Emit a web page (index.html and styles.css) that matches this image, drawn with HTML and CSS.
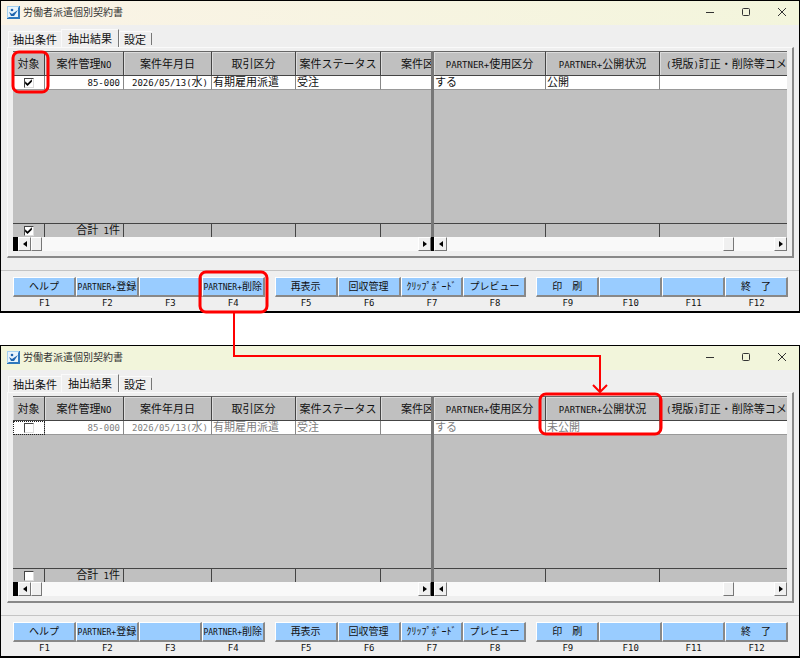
FILE: index.html
```html
<!DOCTYPE html>
<html lang="ja">
<head>
  <meta charset="UTF-8">
  <meta name="viewport" content="width=device-width, initial-scale=1.0">
  <title>労働者派遣個別契約書</title>
  <link rel="stylesheet" href="styles.css">
</head>
<body>
  <!-- Before: published -->
  <section class="window">
    <header class="titlebar">
      <svg class="app-icon" viewBox="0 0 13 13"><rect width="13" height="13" fill="#2f78bd"/><path d="M0 0h12v1L1 12H0z" fill="#a5d0ef"/><path d="M1 1h10v10H1z" fill="#e8f4fc"/><circle cx="5" cy="4" r="1.3" fill="#1d63ae"/><path d="M2 6l3 2 6-4-4 6H4z" fill="#1d63ae"/></svg>
      <h1>労働者派遣個別契約書</h1>
      <div class="window-controls">
        <button aria-label="最小化"><svg viewBox="0 0 10 10"><path d="M1 5.5h8"/></svg></button>
        <button aria-label="最大化"><svg viewBox="0 0 10 10"><rect x="1.5" y="1.5" width="7" height="7" rx="1"/></svg></button>
        <button aria-label="閉じる"><svg viewBox="0 0 10 10"><path d="M1 1l8 8M9 1L1 9"/></svg></button>
      </div>
    </header>
    <nav class="tabs">
      <button class="tab">抽出条件</button>
      <button class="tab active">抽出結果</button>
      <button class="tab">設定</button>
    </nav>
    <main class="panel">
      <div class="grid">
        <div class="pane pane-left">
          <div class="table-clip">
            <table class="table-left">
              <colgroup><col class="c-check"><col class="c-no"><col class="c-date"><col class="c-type"><col class="c-status"><col class="c-kind"></colgroup>
              <thead>
                <tr><th>対象</th><th>案件管理<span class="en">NO</span></th><th>案件年月日</th><th>取引区分</th><th>案件ステータス</th><th>案件区分</th></tr>
              </thead>
              <tbody>
                <tr class="row">
                  <td class="check"><input type="checkbox" aria-label="対象" checked></td>
                  <td class="num"><span class="en">85-000</span></td>
                  <td class="num"><span class="en">2026/05/13(</span>水<span class="en">)</span></td>
                  <td>有期雇用派遣</td><td>受注</td><td></td>
                </tr>
                <tr class="filler"><td colspan="6"></td></tr>
              </tbody>
              <tfoot>
                <tr><td class="check"><input type="checkbox" aria-label="すべて対象" checked></td><td class="num">合計<span class="en"> 1</span>件</td><td></td><td></td><td></td><td></td></tr>
              </tfoot>
            </table>
          </div>
          <div class="scrollbar">
            <span class="split-handle"></span>
            <button class="arrow left" aria-label="左へ"></button>
            <span class="thumb"></span>
            <span class="track"></span>
            <button class="arrow right" aria-label="右へ"></button>
          </div>
        </div>
        <div class="splitter"></div>
        <div class="pane pane-right">
          <div class="table-clip">
            <table class="table-right">
              <colgroup><col class="c-use"><col class="c-public"><col></colgroup>
              <thead>
                <tr><th><span class="en">PARTNER+</span>使用区分</th><th><span class="en">PARTNER+</span>公開状況</th><th class="long"><span class="en">(</span>現版<span class="en">)</span>訂正・削除等コメント</th></tr>
              </thead>
              <tbody>
                <tr class="row"><td>する</td><td>公開</td><td></td></tr>
                <tr class="filler"><td colspan="3"></td></tr>
              </tbody>
              <tfoot>
                <tr><td></td><td></td><td></td></tr>
              </tfoot>
            </table>
          </div>
          <div class="scrollbar">
            <button class="arrow left" aria-label="左へ"></button>
            <span class="track"></span>
            <span class="thumb"></span>
            <span class="track track-end"></span>
            <button class="arrow right" aria-label="右へ"></button>
          </div>
        </div>
      </div>
    </main>
    <footer class="function-keys">
      <div class="key-group">
        <div class="key"><button id="a1">ヘルプ</button><label for="a1">F1</label></div>
        <div class="key"><button id="a2"><span class="en">PARTNER+</span>登録</button><label for="a2">F2</label></div>
        <div class="key"><button id="a3"></button><label for="a3">F3</label></div>
        <div class="key"><button id="a4"><span class="en">PARTNER+</span>削除</button><label for="a4">F4</label></div>
      </div>
      <div class="key-group">
        <div class="key"><button id="a5">再表示</button><label for="a5">F5</label></div>
        <div class="key"><button id="a6">回収管理</button><label for="a6">F6</label></div>
        <div class="key"><button id="a7">ｸﾘｯﾌﾟﾎﾞｰﾄﾞ</button><label for="a7">F7</label></div>
        <div class="key"><button id="a8">プレビュー</button><label for="a8">F8</label></div>
      </div>
      <div class="key-group">
        <div class="key"><button id="a9">印　刷</button><label for="a9">F9</label></div>
        <div class="key"><button id="a10"></button><label for="a10">F10</label></div>
        <div class="key"><button id="a11"></button><label for="a11">F11</label></div>
        <div class="key"><button id="a12">終　了</button><label for="a12">F12</label></div>
      </div>
    </footer>
  </section>

  <!-- After: unpublished -->
  <section class="window">
    <header class="titlebar plain">
      <svg class="app-icon" viewBox="0 0 13 13"><rect width="13" height="13" fill="#2f78bd"/><path d="M0 0h12v1L1 12H0z" fill="#a5d0ef"/><path d="M1 1h10v10H1z" fill="#e8f4fc"/><circle cx="5" cy="4" r="1.3" fill="#1d63ae"/><path d="M2 6l3 2 6-4-4 6H4z" fill="#1d63ae"/></svg>
      <h1>労働者派遣個別契約書</h1>
      <div class="window-controls">
        <button aria-label="最小化"><svg viewBox="0 0 10 10"><path d="M1 5.5h8"/></svg></button>
        <button aria-label="最大化"><svg viewBox="0 0 10 10"><rect x="1.5" y="1.5" width="7" height="7" rx="1"/></svg></button>
        <button aria-label="閉じる"><svg viewBox="0 0 10 10"><path d="M1 1l8 8M9 1L1 9"/></svg></button>
      </div>
    </header>
    <nav class="tabs">
      <button class="tab">抽出条件</button>
      <button class="tab active">抽出結果</button>
      <button class="tab">設定</button>
    </nav>
    <main class="panel">
      <div class="grid">
        <div class="pane pane-left">
          <div class="table-clip">
            <table class="table-left">
              <colgroup><col class="c-check"><col class="c-no"><col class="c-date"><col class="c-type"><col class="c-status"><col class="c-kind"></colgroup>
              <thead>
                <tr><th>対象</th><th>案件管理<span class="en">NO</span></th><th>案件年月日</th><th>取引区分</th><th>案件ステータス</th><th>案件区分</th></tr>
              </thead>
              <tbody>
                <tr class="row muted">
                  <td class="check focus"><input type="checkbox" aria-label="対象"></td>
                  <td class="num"><span class="en">85-000</span></td>
                  <td class="num"><span class="en">2026/05/13(</span>水<span class="en">)</span></td>
                  <td>有期雇用派遣</td><td>受注</td><td></td>
                </tr>
                <tr class="filler"><td colspan="6"></td></tr>
              </tbody>
              <tfoot>
                <tr><td class="check"><input type="checkbox" aria-label="すべて対象"></td><td class="num">合計<span class="en"> 1</span>件</td><td></td><td></td><td></td><td></td></tr>
              </tfoot>
            </table>
          </div>
          <div class="scrollbar">
            <span class="split-handle"></span>
            <button class="arrow left" aria-label="左へ"></button>
            <span class="thumb"></span>
            <span class="track"></span>
            <button class="arrow right" aria-label="右へ"></button>
          </div>
        </div>
        <div class="splitter"></div>
        <div class="pane pane-right">
          <div class="table-clip">
            <table class="table-right">
              <colgroup><col class="c-use"><col class="c-public"><col></colgroup>
              <thead>
                <tr><th><span class="en">PARTNER+</span>使用区分</th><th><span class="en">PARTNER+</span>公開状況</th><th class="long"><span class="en">(</span>現版<span class="en">)</span>訂正・削除等コメント</th></tr>
              </thead>
              <tbody>
                <tr class="row muted"><td>する</td><td>未公開</td><td></td></tr>
                <tr class="filler"><td colspan="3"></td></tr>
              </tbody>
              <tfoot>
                <tr><td></td><td></td><td></td></tr>
              </tfoot>
            </table>
          </div>
          <div class="scrollbar">
            <button class="arrow left" aria-label="左へ"></button>
            <span class="track"></span>
            <span class="thumb"></span>
            <span class="track track-end"></span>
            <button class="arrow right" aria-label="右へ"></button>
          </div>
        </div>
      </div>
    </main>
    <footer class="function-keys">
      <div class="key-group">
        <div class="key"><button id="b1">ヘルプ</button><label for="b1">F1</label></div>
        <div class="key"><button id="b2"><span class="en">PARTNER+</span>登録</button><label for="b2">F2</label></div>
        <div class="key"><button id="b3"></button><label for="b3">F3</label></div>
        <div class="key"><button id="b4"><span class="en">PARTNER+</span>削除</button><label for="b4">F4</label></div>
      </div>
      <div class="key-group">
        <div class="key"><button id="b5">再表示</button><label for="b5">F5</label></div>
        <div class="key"><button id="b6">回収管理</button><label for="b6">F6</label></div>
        <div class="key"><button id="b7">ｸﾘｯﾌﾟﾎﾞｰﾄﾞ</button><label for="b7">F7</label></div>
        <div class="key"><button id="b8">プレビュー</button><label for="b8">F8</label></div>
      </div>
      <div class="key-group">
        <div class="key"><button id="b9">印　刷</button><label for="b9">F9</label></div>
        <div class="key"><button id="b10"></button><label for="b10">F10</label></div>
        <div class="key"><button id="b11"></button><label for="b11">F11</label></div>
        <div class="key"><button id="b12">終　了</button><label for="b12">F12</label></div>
      </div>
    </footer>
  </section>

  <!-- Highlights and the arrow from F4 to the changed column -->
  <svg class="callouts" width="800" height="658" viewBox="0 0 800 658">
    <g class="frames">
      <rect x="13" y="52" width="35" height="40" rx="6"/>
      <rect x="200" y="272" width="67" height="40" rx="6"/>
      <rect x="540" y="394" width="121" height="40" rx="6"/>
    </g>
    <path class="arrow-line" d="M234 312v44h366v35M593 385l7 7 7-7"/>
  </svg>
</body>
</html>
```
FILE: styles.css
```css
* {
  box-sizing: border-box;
}
body {
  position: relative;
  margin: 0;
  background: #fff;
  color: #111;
  font-family: "Noto Sans CJK JP", sans-serif;
  font-size: 11px;
  line-height: 14px;
}
button {
  margin: 0;
  padding: 0;
  border: 0;
  background: none;
  color: inherit;
  font: inherit;
}
.en {
  font-family: "DejaVu Sans Mono", monospace;
  font-size: 9px;
  line-height: 0;
  white-space: pre;
}

/* Window frame */
.window {
  border: 1px solid #000;
  border-bottom-width: 2px;
  background: #efefef;
}
.window + .window {
  margin-top: 32px;
}
.titlebar {
  display: flex;
  align-items: center;
  height: 24px;
  padding: 0 12px 2px 6px;
  background: linear-gradient(90deg, #faf3e6, #f3f5dc);
}
.titlebar.plain {
  background: #f2f5db;
}
.app-icon {
  width: 13px;
  height: 13px;
}
h1 {
  flex: 1;
  margin: 0 0 0 3px;
  font-size: 10px;
  font-weight: 400;
  color: #333;
}
.window-controls {
  display: flex;
  gap: 26px;
}
.window-controls button {
  display: flex;
  width: 10px;
  height: 10px;
}
.window-controls svg {
  width: 10px;
  height: 10px;
  fill: none;
  stroke: #333;
}

/* Tabs */
.tabs {
  display: flex;
  align-items: flex-end;
  height: 22px;
  padding-left: 7px;
}
.tab {
  height: 16px;
  padding: 0 4px 1px;
  border-top: 1px solid #fafafa;
  border-left: 1px solid #fafafa;
}
.tab.active {
  height: 18px;
  padding: 0 6px 1px;
  border-right: 1px solid #777;
}
.tab:last-child {
  position: relative;
  padding-right: 6px;
}
.tab:last-child::after {
  content: "";
  position: absolute;
  top: 1px;
  right: 0;
  height: 12px;
  border-right: 1px solid #777;
}
.panel {
  margin: 0 5px 0 6px;
  padding: 3px 5px 5px;
  border: 1px solid #fafafa;
  border-right: 2px solid #888;
  border-bottom: 2px solid #888;
}

/* Data grid */
.grid {
  display: flex;
  height: 200px;
  background: #c0c0c0;
}
.pane {
  display: flex;
  flex-direction: column;
  min-width: 0;
}
.pane-left {
  width: 418px;
}
.pane-right {
  flex: 1;
}
.table-clip {
  height: 186px;
  overflow: hidden;
}
.splitter {
  width: 3px;
  background: linear-gradient(#777 186px, #000 186px);
}
table {
  height: 186px;
  border-collapse: separate;
  border-spacing: 0;
  table-layout: fixed;
}
.table-left {
  width: 453px;
}
.table-right {
  width: 100%;
}
.c-check { width: 32px; }
.c-no { width: 79px; }
.c-date { width: 88px; }
.c-type { width: 84px; }
.c-status { width: 85px; }
.c-kind { width: 85px; }
.c-use { width: 112px; }
.c-public { width: 114px; }
th,
td {
  padding: 0;
  white-space: nowrap;
}
th {
  height: 25px;
  padding-bottom: 2px;
  border-top: 1px solid #666;
  border-right: 1px solid #444;
  border-bottom: 1px solid #444;
  box-shadow: inset 1px 1px #dcdcdc;
  font-weight: 400;
}
th.long {
  padding-left: 6px;
  border-right: 0;
  text-align: left;
}
.row td {
  height: 14px;
  padding: 0 0 3px 1px;
  border-right: 1px solid #888;
  border-bottom: 1px solid #999;
  background: #fff;
  line-height: 10px;
}
.row td.num {
  padding-right: 3px;
}
.row td:last-child {
  border-right: 0;
}
.row.muted {
  color: #808080;
}
.num {
  text-align: right;
}
tfoot td {
  height: 14px;
  border-top: 1px solid #444;
  border-right: 1px solid #444;
  line-height: 11px;
}
tfoot td.num {
  padding: 0 3px 2px 0;
}
.table-right tfoot td:last-child {
  border-right: 0;
}
.row td.check,
td.check {
  padding: 0;
  text-align: center;
  line-height: 0;
}
.row td.focus {
  outline: 1px dotted #222;
  outline-offset: -1px;
}
input[type="checkbox"] {
  appearance: none;
  width: 10px;
  height: 10px;
  margin: 0;
  border: 1px solid #444;
  border-right-color: #ddd;
  border-bottom-color: #ddd;
  background: #fff;
  vertical-align: top;
}
input[type="checkbox"]:checked::before {
  content: "";
  display: block;
  width: 8px;
  height: 8px;
  background: #000;
  clip-path: polygon(8% 35%, 38% 62%, 92% 10%, 92% 42%, 38% 95%, 8% 65%);
}

/* Scroll bars */
.scrollbar {
  display: flex;
  height: 14px;
  background: #f9f9f9;
}
.split-handle {
  width: 5px;
  background: #000;
}
.arrow,
.thumb {
  width: 13px;
  border: 1px solid #fff;
  border-right-color: #777;
  border-bottom-color: #777;
  background: #f0f0f0;
}
.thumb {
  width: 11px;
}
.arrow {
  display: flex;
  align-items: center;
  justify-content: center;
}
.arrow::before {
  content: "";
  border: 3px solid transparent;
}
.arrow.left::before {
  border-left: 0;
  border-right: 4px solid #000;
}
.arrow.right::before {
  border-right: 0;
  border-left: 4px solid #000;
}
.track {
  flex: 1;
}
.track-end {
  flex: 0 0 40px;
}

/* Function keys */
.function-keys {
  display: flex;
  gap: 10px;
  margin-top: 12px;
  padding: 6px 11px 0 12px;
  border-top: 1px solid #c4c4c4;
}
.key-group {
  display: flex;
  flex: 1;
}
.key {
  display: flex;
  flex: 1;
  flex-direction: column;
  align-items: center;
  min-width: 0;
  font-size: 10px;
}
.key button {
  width: 100%;
  height: 20px;
  padding-bottom: 1px;
  border: 1px solid #fff;
  border-right: 2px solid #888;
  border-bottom: 2px solid #888;
  background: #99ccff;
  white-space: nowrap;
}
.key .en {
  font-size: 8px;
}
.key label {
  margin-bottom: 2px;
  font-family: "DejaVu Sans Mono", monospace;
  font-size: 9px;
  line-height: 12px;
}

/* Callouts */
.callouts {
  position: absolute;
  top: 0;
  left: 0;
  fill: none;
  stroke: #f00;
  pointer-events: none;
}
.frames {
  stroke-width: 3;
}
.arrow-line {
  stroke-width: 2;
}
```
